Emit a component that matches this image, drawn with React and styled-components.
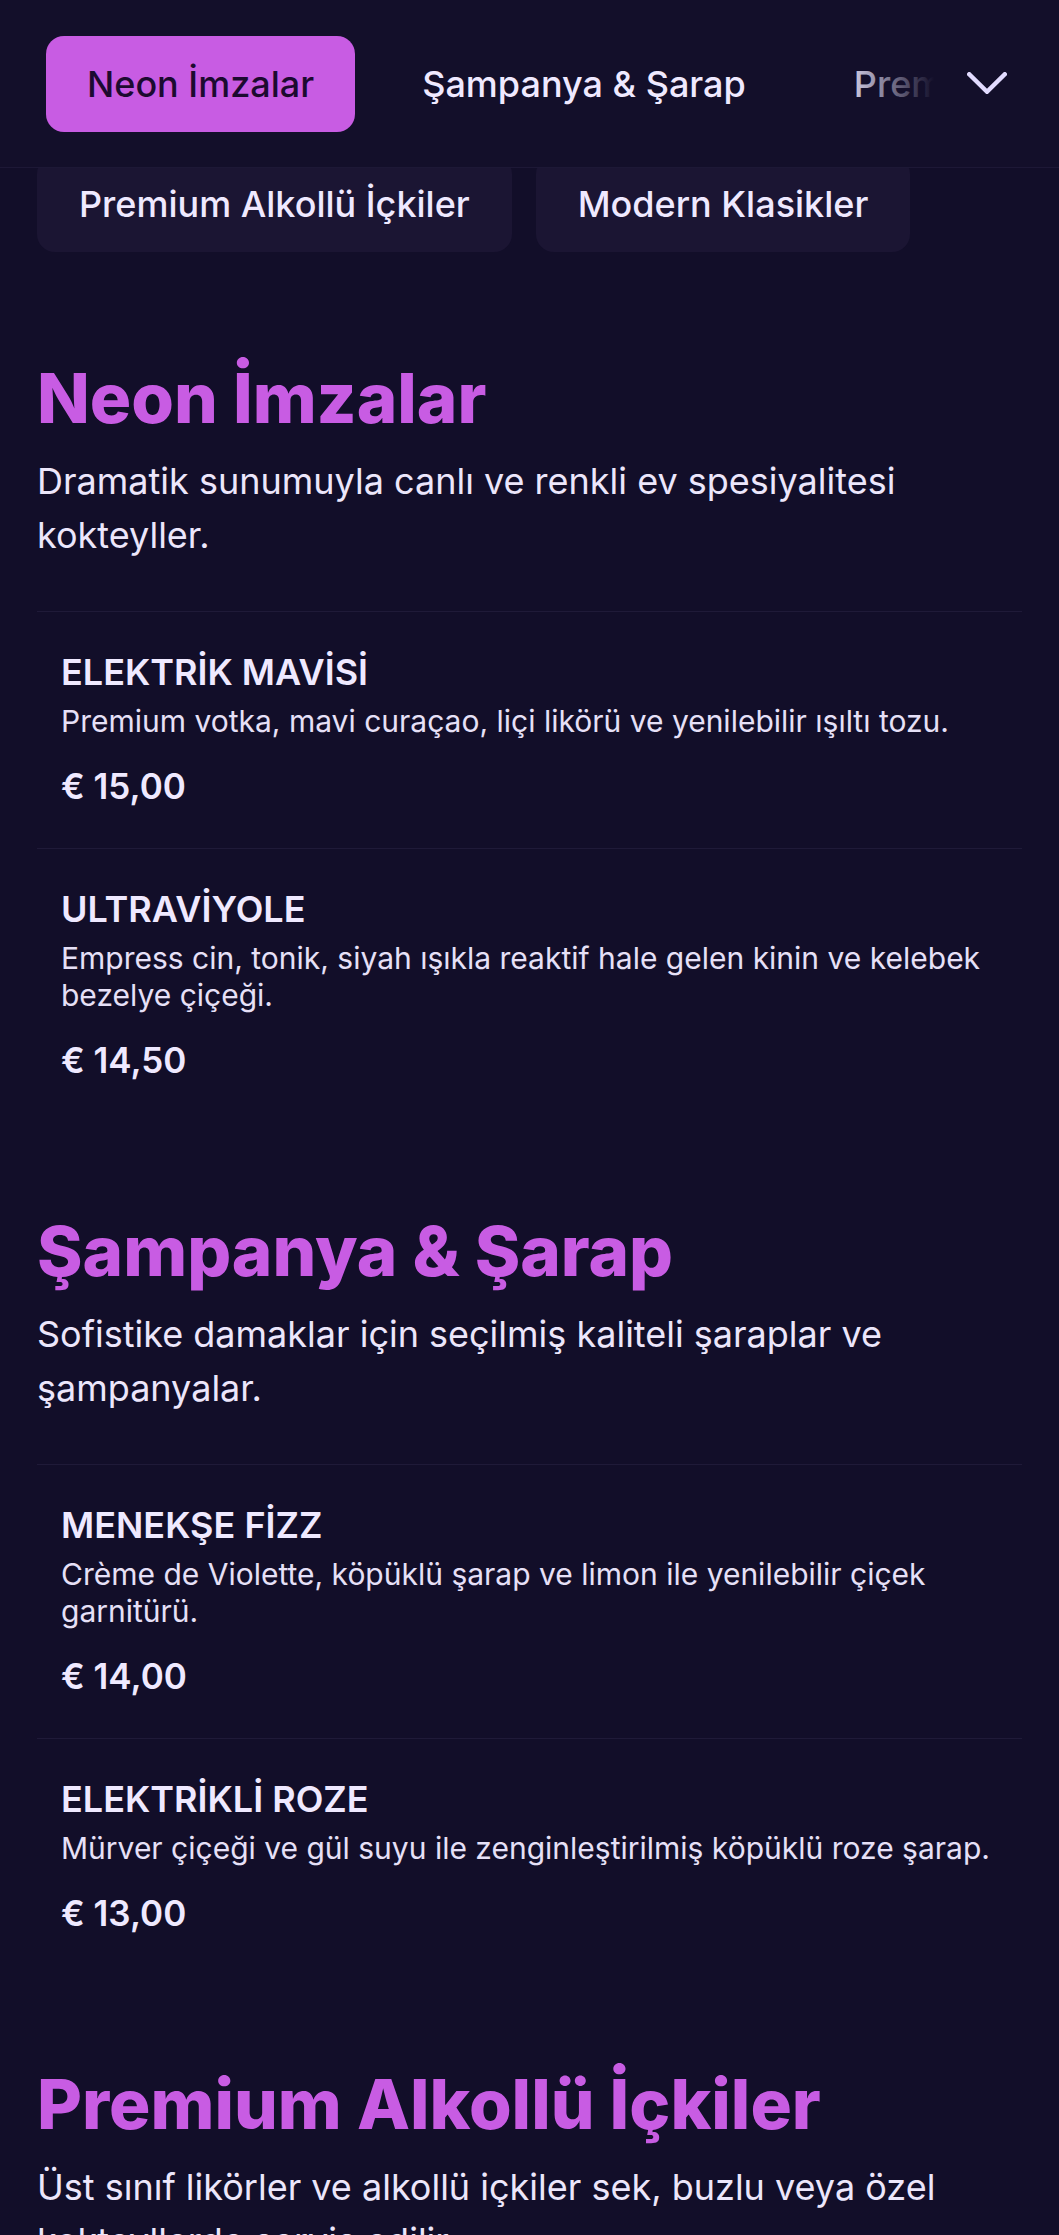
import React from 'react'
import styled, { createGlobalStyle } from 'styled-components'

const GlobalStyle = createGlobalStyle`
  * { box-sizing: border-box; }
  html, body { margin: 0; padding: 0; background: #120e29; }
  body {
    font-family: Inter, "Noto Sans", sans-serif;
    color: #ede7ff;
    -webkit-font-smoothing: antialiased;
  }
`

const Page = styled.div`
  width: 1059px;
  min-height: 2235px;
  background: #120e29;
  overflow: hidden;
`

const Header = styled.header`
  position: sticky;
  top: 0;
  z-index: 5;
  height: 168px;
  background: #130f2a;
  border-bottom: 1px solid #1d1836;
`

const TabStrip = styled.nav`
  height: 100%;
  display: flex;
  align-items: center;
  gap: 26px;
  padding-left: 46px;
  overflow: hidden;
  white-space: nowrap;
`

const Tab = styled.button`
  flex: none;
  height: 96px;
  padding: 0 41px;
  border: 0;
  border-radius: 18px;
  background: ${(p) => (p.$active ? '#c85ce3' : 'transparent')};
  color: ${(p) => (p.$active ? '#1c0a30' : '#efe9ff')};
  font: 500 36px/1 Inter, sans-serif;
`

// fades the overflowing tabs out under the dropdown toggle
const Fade = styled.div`
  position: absolute;
  top: 0;
  right: 0;
  bottom: 1px;
  width: 220px;
  display: flex;
  align-items: center;
  justify-content: flex-end;
  padding-right: 52px;
  background: linear-gradient(90deg, rgba(19, 15, 42, 0) 0, #130f2a 95px);
`

const PillRow = styled.div`
  display: flex;
  flex-wrap: wrap;
  gap: 24px;
  margin-top: -12px;
  padding: 0 37px 17px;
`

const Pill = styled.button`
  flex: none;
  height: 96px;
  padding: 0 42px;
  border: 0;
  border-radius: 18px;
  background: #1b1533;
  color: #efe9ff;
  font: 500 36px/1 Inter, sans-serif;
`

const Section = styled.section`
  padding: 90px 37px 0;
`

const Title = styled.h2`
  margin: 0;
  font: 800 69px/79px Inter, sans-serif;
  color: #c85ce3;
`

const Intro = styled.p`
  margin: 17px 0 0;
  font: 400 36px/53.5px Inter, sans-serif;
  color: #ece6fb;
`

const List = styled.ul`
  list-style: none;
  margin: 49px 0 0;
  padding: 0;
`

const Item = styled.li`
  border-top: 1px solid #1f1a38;
  padding: 34px 24px 36px;
`

const Name = styled.h3`
  margin: 0;
  font: 600 36px/52.5px Inter, sans-serif;
  color: #efe9ff;
`

const Desc = styled.p`
  margin: 4px 0 0;
  font: 400 30px/37px Inter, sans-serif;
  color: #e6e0f7;
`

const Price = styled.div`
  margin-top: 20px;
  font: 600 35px/52.5px Inter, sans-serif;
  color: #efe9ff;
`

function ChevronDown() {
  return (
    <svg width="40" height="22" viewBox="0 0 40 22">
      <polyline
        points="2.25,2.25 20,19.75 37.75,2.25"
        fill="none"
        stroke="#e2dbff"
        strokeWidth="4.5"
        strokeLinecap="round"
        strokeLinejoin="round"
      />
    </svg>
  )
}

const categories = ['Neon İmzalar', 'Şampanya & Şarap', 'Premium Alkollü İçkiler', 'Modern Klasikler']

const sections = [
  {
    title: 'Neon İmzalar',
    intro: 'Dramatik sunumuyla canlı ve renkli ev spesiyalitesi kokteyller.',
    items: [
      { name: 'ELEKTRİK MAVİSİ', desc: 'Premium votka, mavi curaçao, liçi likörü ve yenilebilir ışıltı tozu.', price: '€ 15,00' },
      { name: 'ULTRAVİYOLE', desc: 'Empress cin, tonik, siyah ışıkla reaktif hale gelen kinin ve kelebek bezelye çiçeği.', price: '€ 14,50' },
    ],
  },
  {
    title: 'Şampanya & Şarap',
    intro: 'Sofistike damaklar için seçilmiş kaliteli şaraplar ve şampanyalar.',
    items: [
      { name: 'MENEKŞE FİZZ', desc: 'Crème de Violette, köpüklü şarap ve limon ile yenilebilir çiçek garnitürü.', price: '€ 14,00' },
      { name: 'ELEKTRİKLİ ROZE', desc: 'Mürver çiçeği ve gül suyu ile zenginleştirilmiş köpüklü roze şarap.', price: '€ 13,00' },
    ],
  },
  {
    title: 'Premium Alkollü İçkiler',
    intro: 'Üst sınıf likörler ve alkollü içkiler sek, buzlu veya özel kokteyllerde servis edilir.',
    items: [],
  },
]

export default function App() {
  const active = categories[0]

  return (
    <Page>
      <GlobalStyle />
      <Header>
        <TabStrip>
          {categories.map((c) => (
            <Tab key={c} $active={c === active}>{c}</Tab>
          ))}
        </TabStrip>
        <Fade>
          <ChevronDown />
        </Fade>
      </Header>

      <PillRow>
        {categories.slice(2).map((c) => (
          <Pill key={c}>{c}</Pill>
        ))}
      </PillRow>

      {sections.map((s) => (
        <Section key={s.title}>
          <Title>{s.title}</Title>
          <Intro>{s.intro}</Intro>
          {s.items.length > 0 && (
            <List>
              {s.items.map((it) => (
                <Item key={it.name}>
                  <Name>{it.name}</Name>
                  <Desc>{it.desc}</Desc>
                  <Price>{it.price}</Price>
                </Item>
              ))}
            </List>
          )}
        </Section>
      ))}
    </Page>
  )
}
